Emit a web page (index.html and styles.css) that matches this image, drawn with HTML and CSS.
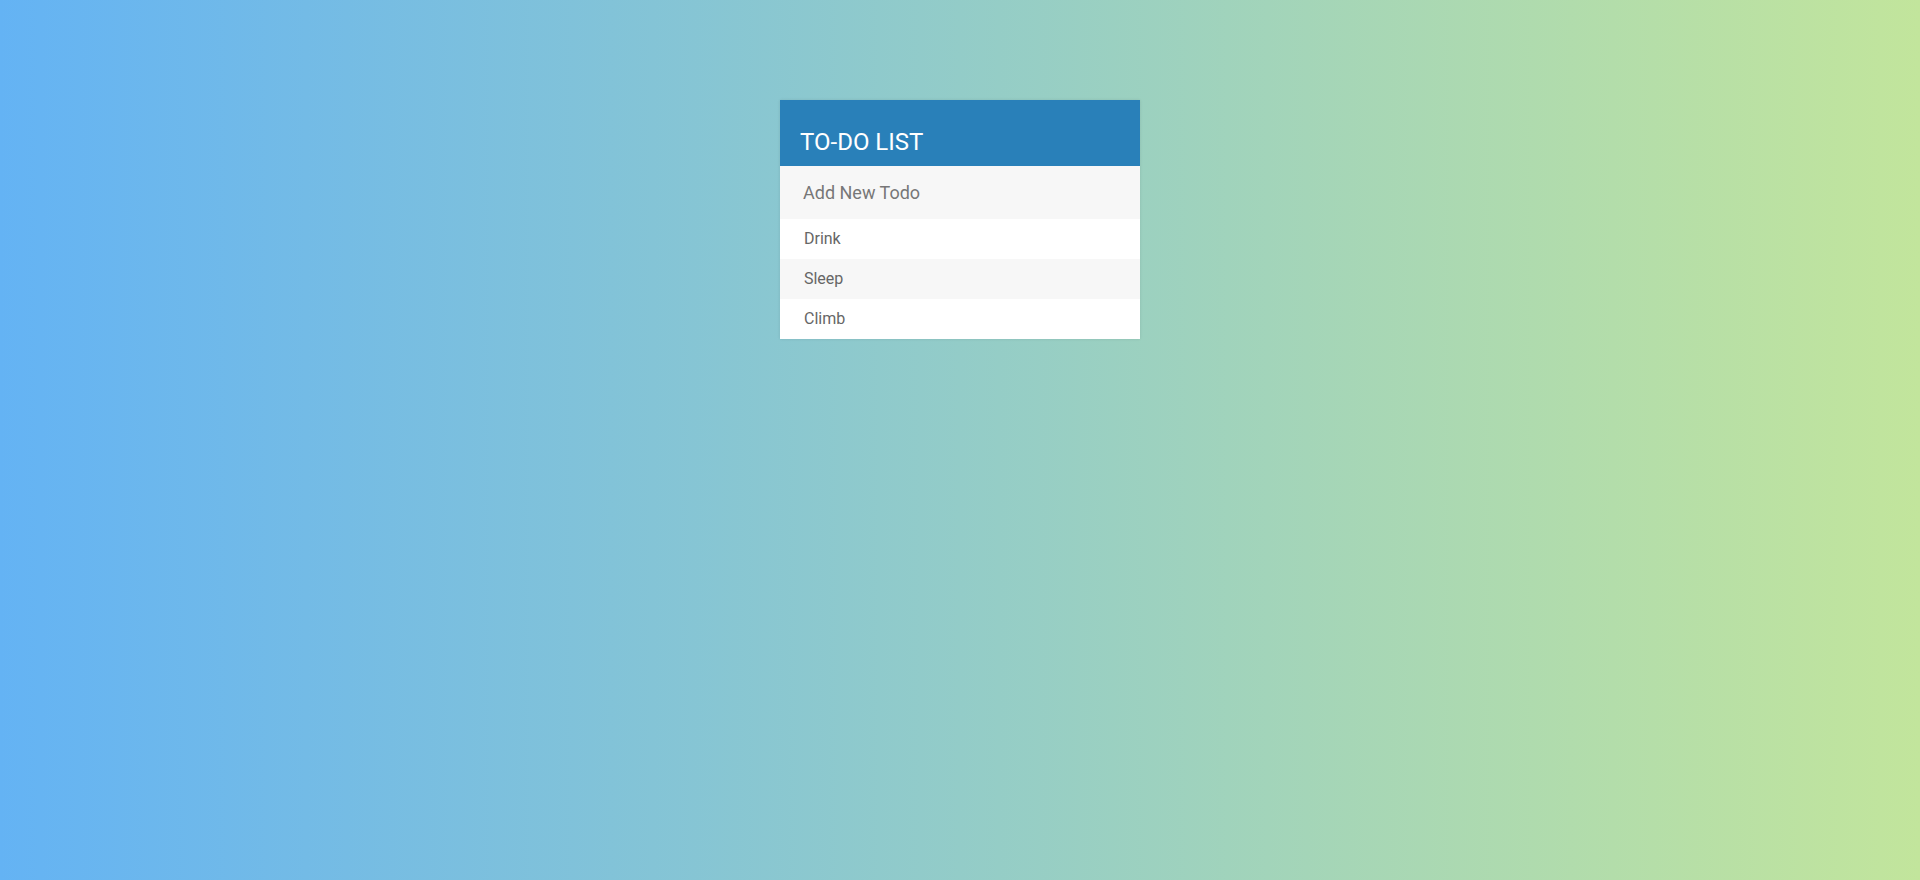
FILE: index.html
```html
<!DOCTYPE html>
<html lang="en">
<head>
<meta charset="utf-8">
<title>To-Do List</title>
<link rel="stylesheet" href="styles.css">
</head>
<body>
  <div class="container">
    <h1 class="title">To-Do List</h1>
    <input class="new-todo" type="text" placeholder="Add New Todo">
    <ul class="todos">
      <li class="todo"><span class="delete"></span> Drink</li>
      <li class="todo"><span class="delete"></span> Sleep</li>
      <li class="todo"><span class="delete"></span> Climb</li>
    </ul>
  </div>
</body>
</html>
```
FILE: styles.css
```css
html {
  height: 100%;
}
body {
  margin: 0;
  min-height: 100%;
  font-family: Roboto, "Liberation Sans", sans-serif;
  background: linear-gradient(90deg, #64b3f4, #c2e59c);
  display: flow-root;
}
.container {
  width: 360px;
  margin: 100px auto;
  background: #f7f7f7;
  box-shadow: 0 0 3px rgba(0, 0, 0, 0.1);
}
.title {
  margin: 0;
  padding: 28px 20px 10px;
  background: #2980b9;
  color: #fff;
  text-transform: uppercase;
  font-size: 24px;
  font-weight: normal;
  line-height: 28px;
}
.new-todo {
  display: block;
  width: 100%;
  box-sizing: border-box;
  font-family: Roboto, "Liberation Sans", sans-serif;
  font-size: 18px;
  line-height: 21px;
  padding: 13px 13px 13px 20px;
  background: #f7f7f7;
  border: 3px solid rgba(0, 0, 0, 0);
  color: #2980b9;
  outline: none;
}
.new-todo::placeholder {
  color: #777;
}
.todos {
  list-style: none;
  margin: 0;
  padding: 0;
}
.todo {
  background: #fff;
  height: 40px;
  line-height: 40px;
  color: #666;
  font-size: 16px;
}
.todo:nth-child(2n) {
  background: #f7f7f7;
}
.delete {
  display: inline-block;
  width: 0;
  margin-right: 20px;
}
```
